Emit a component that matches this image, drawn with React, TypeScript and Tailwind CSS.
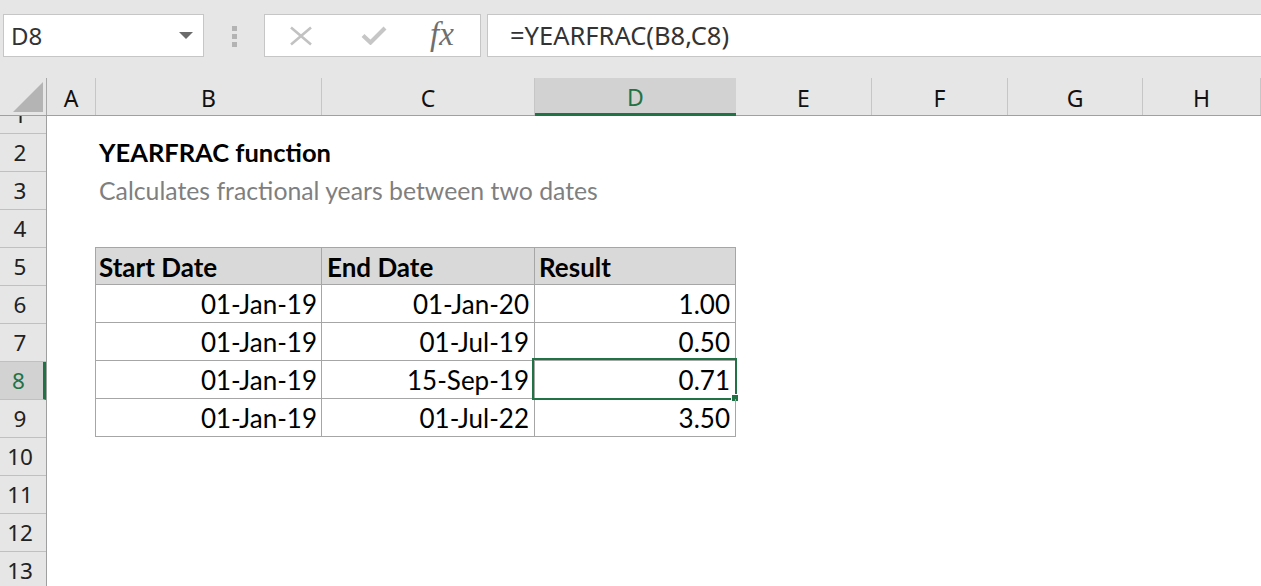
import React from 'react';

const cellFont = { fontFamily: 'Lato, "Open Sans", sans-serif' };
const uiFont = { fontFamily: '"Noto Sans", "Open Sans", sans-serif' };

// column headers: widths are distances between separators
const headCols = [
  { k: 'A', w: 'w-[49px]' },
  { k: 'B', w: 'w-[226px]' },
  { k: 'C', w: 'w-[213px]' },
  { k: 'D', w: 'w-[201px]', active: true },
  { k: 'E', w: 'w-[136px]' },
  { k: 'F', w: 'w-[136px]' },
  { k: 'G', w: 'w-[135px]' },
  { k: 'H', w: 'flex-1' },
];

const rows = [
  ['01-Jan-19', '01-Jan-20', '1.00'],
  ['01-Jan-19', '01-Jul-19', '0.50'],
  ['01-Jan-19', '15-Sep-19', '0.71'],
  ['01-Jan-19', '01-Jul-22', '3.50'],
];

const RowHead: React.FC<{ n: number; active?: boolean }> = ({ n, active }) => (
  <div
    className={`h-[38px] flex items-center justify-center pr-[6px] border-b border-[#c0c0c0] text-[22.5px] ${
      active ? 'bg-[#d2d2d2] text-[#217346] border-r-[3px] border-r-[#217346]' : 'bg-[#e6e6e6] text-[#222]'
    }`}
    style={uiFont}
  >
    {n}
  </div>
);

const NameBox = () => (
  <div className="ml-[3px] w-[201px] h-[43px] bg-white border border-[#c6c6c6] flex items-center justify-between pl-[7px] pr-[10px]">
    <span className="text-[24px] text-[#333]" style={uiFont}>D8</span>
    <svg width="14" height="7" viewBox="0 0 14 7">
      <polygon points="0,0 14,0 7,7" fill="#6b6b6b" />
    </svg>
  </div>
);

const FormulaButtons = () => (
  <div className="w-[217px] h-[43px] bg-white border border-[#c6c6c6] flex items-center">
    <svg width="24" height="20" viewBox="0 0 24 20" className="ml-[24px]">
      <path d="M2 1.5 L22 18.5 M22 1.5 L2 18.5" stroke="#c2c2c2" strokeWidth="2.6" fill="none" />
    </svg>
    <svg width="26" height="19" viewBox="0 0 26 19" className="ml-[48px]">
      <path d="M2 9.5 L9.5 16.5 L24 2" stroke="#c6c6c6" strokeWidth="4.2" fill="none" />
    </svg>
    <span
      className="ml-[43px] text-[33px] italic text-[#6f6f6f] leading-none -mt-[2px]"
      style={{ fontFamily: '"Liberation Serif", serif' }}
    >
      fx
    </span>
  </div>
);

export default function App() {
  return (
    <div className="w-[1261px] h-[586px] overflow-hidden bg-white" style={cellFont}>
      {/* formula bar */}
      <div className="h-[78px] bg-[#e6e6e6] pt-[14px] flex items-start">
        <NameBox />
        <div className="ml-[28px] mt-[12px] flex flex-col gap-[3px]">
          <div className="w-[5px] h-[5px] bg-[#b3b3b3]" />
          <div className="w-[5px] h-[5px] bg-[#b3b3b3]" />
          <div className="w-[5px] h-[5px] bg-[#b3b3b3]" />
        </div>
        <div className="ml-[27px]">
          <FormulaButtons />
        </div>
        <div className="ml-[6px] flex-1 h-[43px] bg-white border border-r-0 border-[#c6c6c6] flex items-center pl-[22px]">
          <span className="text-[25.5px] text-[#333]" style={uiFont}>=YEARFRAC(B8,C8)</span>
        </div>
      </div>

      {/* column headers */}
      <div className="h-[38px] flex bg-[#e6e6e6] border-b border-[#a0a0a0]" style={uiFont}>
        <div className="w-[47px] border-r border-[#a8a8a8] flex items-end justify-end pr-[3px] pb-[3px]">
          <svg width="30" height="30" viewBox="0 0 30 30">
            <polygon points="30,0 30,30 0,30" fill="#b4b4b4" />
          </svg>
        </div>
        {headCols.map((c) => (
          <div
            key={c.k}
            className={`${c.w} flex items-center justify-center pt-[3px] text-[23px] ${
              c.active
                ? 'bg-[#d2d2d2] text-[#217346] border-b-[3px] border-[#217346] -mb-[1px]'
                : 'text-[#111] border-r border-[#c6c6c6]'
            }`}
          >
            {c.k}
          </div>
        ))}
      </div>

      {/* body */}
      <div className="flex">
        <div className="w-[47px] border-r border-[#9f9f9f] bg-[#e6e6e6]">
          <div className="h-[18px] overflow-hidden border-b border-[#c0c0c0]">
            <div className="-mt-[20px]">
              <RowHead n={1} />
            </div>
          </div>
          {[2, 3, 4, 5, 6, 7, 8, 9, 10, 11, 12, 13].map((n) => (
            <RowHead key={n} n={n} active={n === 8} />
          ))}
        </div>

        <div className="flex-1 flex flex-col">
          <div className="h-[17px]" />
          {/* row 2 */}
          <div className="h-[38px] flex items-center pl-[52px] pt-[1px] text-[25.5px] font-bold text-black">
            YEARFRAC function
          </div>
          {/* row 3 */}
          <div className="h-[38px] flex items-center pl-[52px] pt-[1px] text-[24.8px] text-[#7f7f7f]">
            Calculates fractional years between two dates
          </div>
          {/* row 4 */}
          <div className="h-[38px]" />
          {/* table rows 5-9 */}
          <div className="ml-[48px] w-[641px] border-t border-l border-[#a6a6a6]">
            <div className="h-[37px] flex bg-[#d9d9d9] text-[26px] font-bold text-black">
              <div className="w-[226px] border-r border-b border-[#a6a6a6] flex items-center pl-[3px] pt-[2px]">Start Date</div>
              <div className="w-[213px] border-r border-b border-[#a6a6a6] flex items-center pl-[5px] pt-[2px]">End Date</div>
              <div className="w-[201px] border-r border-b border-[#a6a6a6] flex items-center pl-[4px] pt-[2px]">Result</div>
            </div>
            {rows.map((r, i) => (
              <div key={i} className="h-[38px] flex text-[26px] text-black">
                <div className="w-[226px] border-r border-b border-[#a6a6a6] flex items-center justify-end pr-[4px] pt-[2px]">{r[0]}</div>
                <div className="w-[213px] border-r border-b border-[#a6a6a6] flex items-center justify-end pr-[5px] pt-[2px]">{r[1]}</div>
                <div className="relative w-[201px] border-r border-b border-[#a6a6a6] flex items-center justify-end pr-[5px] pt-[2px]">
                  {r[2]}
                  {i === 2 && (
                    <>
                      <div className="absolute -left-[3px] -top-[3px] -right-[2px] -bottom-[2px] border-2 border-[#217346]" />
                      <div className="absolute -right-[4px] -bottom-[4px] w-[8px] h-[8px] bg-[#217346] border border-white" />
                    </>
                  )}
                </div>
              </div>
            ))}
          </div>
        </div>
      </div>
    </div>
  );
}
